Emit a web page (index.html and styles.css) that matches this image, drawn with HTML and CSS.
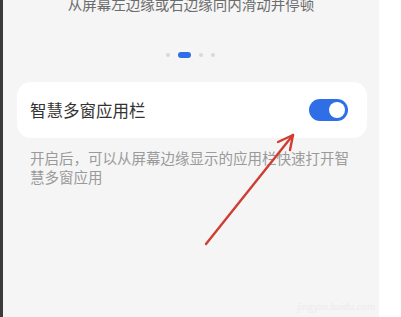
FILE: index.html
```html
<!DOCTYPE html>
<html lang="zh">
<head>
<meta charset="utf-8">
<link rel="stylesheet" href="styles.css">
</head>
<body>
<div class="frame">
  <div class="edge"></div>
  <main class="screen">
    <p class="hint">从屏幕左边缘或右边缘向内滑动并停顿</p>
    <div class="dots">
      <span class="dot"></span>
      <span class="dot active"></span>
      <span class="dot"></span>
      <span class="dot"></span>
    </div>
    <div class="card">
      <span class="card-title">智慧多窗应用栏</span>
      <span class="switch"><span class="knob"></span></span>
    </div>
    <p class="desc">开启后，可以从屏幕边缘显示的应用栏快速打开智慧多窗应用</p>
    <div class="watermark">jingyan.baidu.com</div>
  </main>
  <div class="side"></div>
  <svg class="arrow" width="401" height="317" viewBox="0 0 401 317">
    <g stroke="#cf3d33" stroke-width="2.4" stroke-linecap="round" fill="none">
      <line x1="206" y1="244" x2="293" y2="135"/>
      <line x1="293" y1="135" x2="278" y2="142"/>
      <line x1="293" y1="135" x2="290" y2="150"/>
    </g>
  </svg>
</div>
</body>
</html>
```
FILE: styles.css
```css
html, body {
  margin: 0;
  padding: 0;
  background: #ffffff;
}
body {
  font-family: "Noto Sans CJK SC", "Noto Sans", sans-serif;
  overflow: hidden;
}
.frame {
  position: relative;
  display: flex;
  width: 401px;
  height: 317px;
  overflow: hidden;
}
.edge {
  width: 3px;
  background: #3b3b3b;
  flex: none;
}
.screen {
  width: 376px;
  flex: none;
  background: #f5f5f5;
  display: flex;
  flex-direction: column;
  position: relative;
}
.side {
  flex: 1;
  background: #ffffff;
}
.hint {
  margin: -5px 0 0;
  text-align: center;
  font-size: 14.5px;
  line-height: 18px;
  color: #6c6c6c;
}
.dots {
  display: flex;
  justify-content: center;
  align-items: center;
  gap: 8px;
  margin-top: 39px;
  height: 6px;
  padding-right: 2px;
}
.dot {
  width: 4px;
  height: 4px;
  border-radius: 50%;
  background: #d8d8d8;
}
.dot.active {
  width: 13px;
  height: 6px;
  border-radius: 3px;
  background: #2f6ee6;
}
.card {
  margin: 24px 12px 0 14px;
  height: 56px;
  background: #ffffff;
  border-radius: 14px;
  display: flex;
  align-items: center;
  justify-content: space-between;
  padding: 0 19px 0 13px;
}
.card-title {
  font-size: 16.5px;
  color: #333333;
  line-height: 20px;
}
.switch {
  width: 39px;
  height: 22px;
  border-radius: 11px;
  background: #2f6ee6;
  display: flex;
  align-items: center;
  justify-content: flex-end;
  padding: 0 3px;
  box-sizing: border-box;
}
.knob {
  width: 16px;
  height: 16px;
  border-radius: 50%;
  background: #ffffff;
}
.desc {
  margin: 10px 0 0 27px;
  width: 326px;
  font-size: 14.5px;
  line-height: 19px;
  color: #9a9a9a;
}
.watermark {
  position: absolute;
  right: 4px;
  bottom: 4px;
  font-size: 9px;
  color: #ececec;
}
.arrow {
  position: absolute;
  left: 0;
  top: 0;
  pointer-events: none;
}
```
